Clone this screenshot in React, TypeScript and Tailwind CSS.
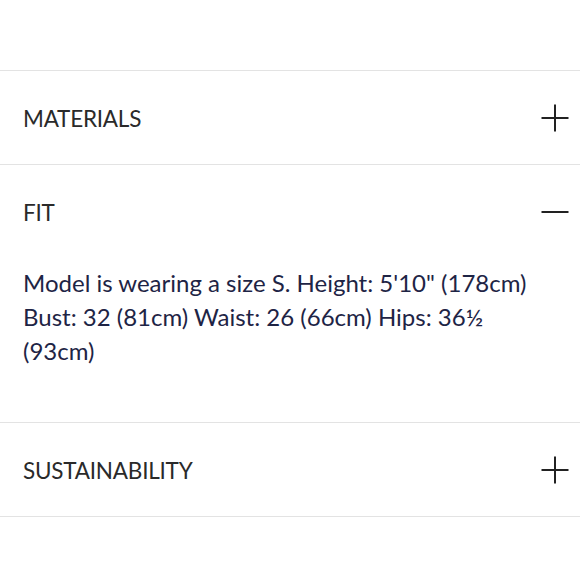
import { useState } from 'react';

type Section = {
  id: string;
  title: string;
  body?: string[];
};

const sections: Section[] = [
  { id: 'materials', title: 'MATERIALS' },
  {
    id: 'fit',
    title: 'FIT',
    body: [
      'Model is wearing a size S. Height: 5\'10" (178cm)',
      'Bust: 32 (81cm) Waist: 26 (66cm) Hips: 36½',
      '(93cm)',
    ],
  },
  { id: 'sustainability', title: 'SUSTAINABILITY' },
];

const PlusIcon = ({ open }: { open: boolean }) => (
  <svg width="28" height="28" viewBox="0 0 28 28" fill="none" stroke="#222" strokeWidth="2">
    <line x1="0.5" y1="14" x2="27.5" y2="14" />
    {!open && <line x1="14" y1="0.5" x2="14" y2="27.5" />}
  </svg>
);

const App = () => {
  const [openId, setOpenId] = useState<string | null>('fit');

  return (
    <div className="w-[580px] h-[579px] bg-white pt-[70px] font-['Lato',sans-serif]">
      {sections.map((s, i) => {
        const open = openId === s.id;
        return (
          <div
            key={s.id}
            className={`border-t border-[#e3e3e3] ${i === sections.length - 1 ? 'border-b' : ''}`}
          >
            <button
              type="button"
              onClick={() => setOpenId(open ? null : s.id)}
              className="w-full h-[93px] flex items-center justify-between pl-[23px] pr-[11px] text-left"
            >
              <span className="pt-[4px] text-[22.5px] leading-none text-[#2a2a2a] tracking-[-0.01em]">{s.title}</span>
              <PlusIcon open={open} />
            </button>
            {open && s.body && (
              <div className="pl-[23px] pr-[11px] pt-[8px] pb-[54px] text-[24px] leading-[34px] text-[#1e2445]">
                {s.body.map(line => (
                  <p key={line}>{line}</p>
                ))}
              </div>
            )}
          </div>
        );
      })}
    </div>
  );
};

export default App;
